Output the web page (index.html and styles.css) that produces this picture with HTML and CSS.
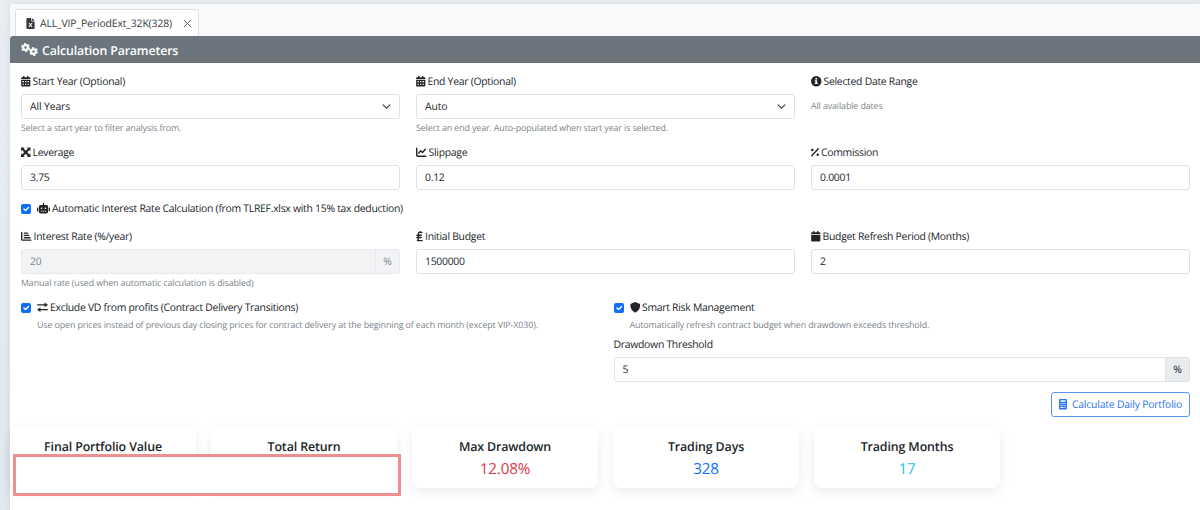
FILE: index.html
```html
<!DOCTYPE html>
<html lang="en">
<head>
    <meta charset="UTF-8">
    <meta name="viewport" content="width=device-width, initial-scale=1.0">
    <title>Portfolio Calculation</title>
    <link rel="stylesheet" href="styles.css">
</head>
<body>
    <div class="panel">
        <div class="tabs">
            <div class="tab">
                <svg class="icon-file" viewBox="0 0 384 512"><path fill="currentColor" fill-rule="evenodd" d="M64 0C29 0 0 29 0 64v384c0 35 29 64 64 64h256c35 0 64-29 64-64V160H256c-18 0-32-14-32-32V0H64zm192 0v128h128L256 0zM96 228h56l40 60 40-60h56l-66 96 66 96h-56l-40-60-40 60H96l66-96-66-96z"/></svg>
                <span class="tab-name">ALL_VIP_PeriodExt_32K(328)</span>
                <svg class="tab-close" viewBox="0 0 10 10"><path d="M1 1l8 8M9 1L1 9" fill="none" stroke="currentColor" stroke-width="1"/></svg>
            </div>
        </div>
        <div class="panel-header">
            <svg class="icon-cogs" viewBox="0 0 34 26">
                <g fill="none" stroke="currentColor">
                    <circle cx="9" cy="9" r="4.8" stroke-width="4.4"/>
                    <circle cx="9" cy="9" r="7.4" stroke-width="3.2" stroke-dasharray="4.2 3.55"/>
                    <circle cx="25" cy="17" r="4.6" stroke-width="4.2"/>
                    <circle cx="25" cy="17" r="7.2" stroke-width="3.2" stroke-dasharray="4 3.54"/>
                </g>
            </svg>
            <span class="panel-title">Calculation Parameters</span>
        </div>

        <form class="params">
            <div class="row row-dates">
                <div class="field">
                    <label for="start-year">
                        <svg class="icon w9" viewBox="0 0 448 512"><path fill="currentColor" fill-rule="evenodd" d="M96 0h64v64h128V0h64v64h48c26 0 48 22 48 48v48H0v-48c0-26 22-48 48-48h48V0zM0 192h448v272c0 26-22 48-48 48H48c-26 0-48-22-48-48V192zm64 56v56h72v-56H64zm124 0v56h72v-56h-72zm124 0v56h72v-56h-72zM64 376v56h72v-56H64zm124 0v56h72v-56h-72zm124 0v56h72v-56h-72z"/></svg>
                        <span>Start Year (Optional)</span>
                    </label>
                    <select id="start-year" class="control select"><option>All Years</option></select>
                    <small class="help">Select a start year to filter analysis from.</small>
                </div>
                <div class="field">
                    <label for="end-year">
                        <svg class="icon w9" viewBox="0 0 448 512"><path fill="currentColor" fill-rule="evenodd" d="M96 0h64v64h128V0h64v64h48c26 0 48 22 48 48v48H0v-48c0-26 22-48 48-48h48V0zM0 192h448v272c0 26-22 48-48 48H48c-26 0-48-22-48-48V192zm64 56v56h72v-56H64zm124 0v56h72v-56h-72zm124 0v56h72v-56h-72zM64 376v56h72v-56H64zm124 0v56h72v-56h-72zm124 0v56h72v-56h-72z"/></svg>
                        <span>End Year (Optional)</span>
                    </label>
                    <select id="end-year" class="control select"><option>Auto</option></select>
                    <small class="help">Select an end year. Auto-populated when start year is selected.</small>
                </div>
                <div class="field">
                    <label>
                        <svg class="icon w10" viewBox="0 0 512 512"><path fill="currentColor" fill-rule="evenodd" d="M256 0a256 256 0 1 0 0 512 256 256 0 1 0 0-512zm-44 100h88v76h-88v-76zm-28 112h116v128h32v56H180v-56h36v-72h-32v-56z"/></svg>
                        <span>Selected Date Range</span>
                    </label>
                    <small class="date-range">All available dates</small>
                </div>
            </div>

            <div class="row row-costs">
                <div class="field">
                    <label for="leverage">
                        <svg class="icon w9" viewBox="0 0 448 448"><path fill="currentColor" d="M0 0h172l-50 50 102 102L326 50 276 0h172v172l-50-50-102 102 102 102 50-50v172H276l50-50-102-102-102 102 50 50H0V276l50 50 102-102L50 122 0 172z"/></svg>
                        <span>Leverage</span>
                    </label>
                    <input id="leverage" class="control" type="text" value="3.75">
                </div>
                <div class="field">
                    <label for="slippage">
                        <svg class="icon w10" viewBox="0 0 512 512"><path fill="none" stroke="currentColor" stroke-width="68" stroke-linecap="round" stroke-linejoin="round" d="M34 64v336c0 26 22 48 48 48h396M128 300l100-116 88 82 142-154"/></svg>
                        <span>Slippage</span>
                    </label>
                    <input id="slippage" class="control" type="text" value="0.12">
                </div>
                <div class="field">
                    <label for="commission">
                        <svg class="icon w8" viewBox="0 0 384 448"><path fill="none" stroke="currentColor" stroke-width="66" stroke-linecap="round" d="M348 60L36 388"/><circle cx="62" cy="110" r="60" fill="currentColor"/><circle cx="322" cy="340" r="60" fill="currentColor"/></svg>
                        <span>Commission</span>
                    </label>
                    <input id="commission" class="control" type="text" value="0.0001">
                </div>
            </div>

            <label class="check check-auto">
                <input type="checkbox" checked>
                <svg class="icon w13" viewBox="0 0 640 512"><path fill="currentColor" fill-rule="evenodd" d="M288 0h64v96h112c44 0 80 36 80 80v256c0 44-36 80-80 80H176c-44 0-80-36-80-80V176c0-44 36-80 80-80h112V0zM224 216a40 40 0 1 0 0 80 40 40 0 1 0 0-80zm192 0a40 40 0 1 0 0 80 40 40 0 1 0 0-80zM192 376v40h64v-40h-64zm96 0v40h64v-40h-64zm96 0v40h64v-40h-64zM64 224v192H48c-26 0-48-22-48-48v-96c0-26 22-48 48-48h16zm512 0h16c26 0 48 22 48 48v96c0 26-22 48-48 48h-16V224z"/></svg>
                <span>Automatic Interest Rate Calculation (from TLREF.xlsx with 15% tax deduction)</span>
            </label>

            <div class="row row-budget">
                <div class="field">
                    <label for="interest">
                        <svg class="icon w10" viewBox="0 0 512 512"><path fill="none" stroke="currentColor" stroke-width="64" stroke-linecap="round" stroke-linejoin="round" d="M34 64v336c0 26 22 48 48 48h396M160 104h160M160 216h220M160 328h280"/></svg>
                        <span>Interest Rate (%/year)</span>
                    </label>
                    <div class="group disabled">
                        <input id="interest" class="control" type="text" value="20" disabled>
                        <span class="addon">%</span>
                    </div>
                    <small class="help">Manual rate (used when automatic calculation is disabled)</small>
                </div>
                <div class="field">
                    <label for="budget">
                        <svg class="icon w6" viewBox="0 0 320 512"><path fill="none" stroke="currentColor" stroke-width="70" stroke-linecap="round" d="M274 76C190 20 106 60 106 152v200c0 60-30 108-70 118h250M34 210h210M34 320h210"/></svg>
                        <span>Initial Budget</span>
                    </label>
                    <input id="budget" class="control" type="text" value="1500000">
                </div>
                <div class="field">
                    <label for="refresh">
                        <svg class="icon w9" viewBox="0 0 448 512"><path fill="currentColor" d="M96 0h64v64h128V0h64v64h48c26 0 48 22 48 48v48H0v-48c0-26 22-48 48-48h48V0zM0 192h448v272c0 26-22 48-48 48H48c-26 0-48-22-48-48V192z"/></svg>
                        <span>Budget Refresh Period (Months)</span>
                    </label>
                    <input id="refresh" class="control" type="text" value="2">
                </div>
            </div>

            <div class="row row-risk">
                <div class="field">
                    <label class="check">
                        <input type="checkbox" checked>
                        <svg class="icon w11" viewBox="0 0 512 448"><path fill="none" stroke="currentColor" stroke-width="60" stroke-linecap="round" stroke-linejoin="round" d="M32 112h330M150 336h330"/><path fill="currentColor" d="M350 0l162 112-162 112zM162 224v224L0 336z"/></svg>
                        <span>Exclude VD from profits (Contract Delivery Transitions)</span>
                    </label>
                    <small class="help help-indent">Use open prices instead of previous day closing prices for contract delivery at the beginning of each month (except VIP-X030).</small>
                </div>
                <div class="field">
                    <label class="check">
                        <input type="checkbox" checked>
                        <svg class="icon w10" viewBox="0 0 512 512"><path fill="currentColor" d="M256 0l208 84c20 8 34 28 34 50-2 150-62 300-222 374a48 48 0 0 1-40 0C76 434 16 284 14 134c0-22 14-42 34-50z"/></svg>
                        <span>Smart Risk Management</span>
                    </label>
                    <small class="help help-indent">Automatically refresh contract budget when drawdown exceeds threshold.</small>
                    <label for="threshold" class="threshold-label"><span>Drawdown Threshold</span></label>
                    <div class="group">
                        <input id="threshold" class="control" type="text" value="5">
                        <span class="addon">%</span>
                    </div>
                </div>
            </div>

            <div class="actions">
                <button type="button" class="btn">
                    <svg class="icon-calc" viewBox="0 0 384 512"><path fill="currentColor" fill-rule="evenodd" d="M48 0h288c26 0 48 22 48 48v416c0 26-22 48-48 48H48c-26 0-48-22-48-48V48C0 22 22 0 48 0zm24 64v76h240V64H72zm0 134v50h50v-50H72zm95 0v50h50v-50h-50zm95 0v50h50v-50h-50zM72 294v50h50v-50H72zm95 0v50h50v-50h-50zm95 0v50h50v-50h-50zM72 390v50h145v-50H72zm190 0v50h50v-50h-50z"/></svg>
                    <span>Calculate Daily Portfolio</span>
                </button>
            </div>
        </form>

        <div class="stats">
            <div class="stat">
                <h6>Final Portfolio Value</h6>
            </div>
            <div class="stat">
                <h6>Total Return</h6>
            </div>
            <div class="stat">
                <h6>Max Drawdown</h6>
                <span class="value red">12.08%</span>
            </div>
            <div class="stat">
                <h6>Trading Days</h6>
                <span class="value blue">328</span>
            </div>
            <div class="stat">
                <h6>Trading Months</h6>
                <span class="value cyan">17</span>
            </div>
            <div class="highlight"></div>
        </div>
    </div>
</body>
</html>
```

FILE: styles.css
```css
* {
    box-sizing: border-box;
}
body {
    margin: 0;
    padding: 4px 0 0 10px;
    height: 510px;
    overflow: hidden;
    font-family: "Open Sans", "Noto Sans", sans-serif;
    font-size: 10.4px;
    letter-spacing: -0.12px;
    text-rendering: geometricPrecision;
    color: #212529;
    background: linear-gradient(#eaeef3, #e2e7f0);
}
.panel {
    height: 520px;
    background: #fff;
    box-shadow: 0 0 8px rgba(0, 0, 0, 0.08);
}
.tabs {
    display: flex;
    height: 32px;
    padding: 5px 0 0 5px;
    background: #f8f9fb;
}
.tab {
    display: flex;
    align-items: center;
    width: 184px;
    padding: 0 6px 0 10px;
    border: 1px solid #dee2e6;
    border-bottom: none;
    border-radius: 3px 3px 0 0;
    background: #fff;
    color: #343a40;
}
.icon-file {
    width: 9px;
    height: 11px;
    margin-right: 5px;
}
.tab-name {
    padding-top: 1px;
    white-space: nowrap;
}
.tab-close {
    width: 9px;
    height: 9px;
    margin-left: auto;
    color: #555;
}
.panel-header {
    display: flex;
    align-items: center;
    height: 27px;
    padding: 0 10px 0 11px;
    border-radius: 3px 0 0 0;
    background: #6c757d;
    color: #fff;
}
.icon-cogs {
    width: 17px;
    height: 13px;
    margin-right: 4px;
}
.panel-title {
    padding-top: 1px;
    font-size: 12.3px;
    font-weight: 600;
}
.params {
    padding: 10px 10px 0 11px;
}
.row {
    display: grid;
    grid-template-columns: repeat(3, 1fr);
    column-gap: 16px;
}
.row-costs {
    margin-top: 9px;
}
.row-budget {
    margin-top: 11px;
}
.row-risk {
    grid-template-columns: repeat(2, 1fr);
    margin-top: 9px;
}
.field {
    min-width: 0;
}
label {
    display: flex;
    align-items: center;
    height: 17px;
    margin-bottom: 4px;
    letter-spacing: -0.27px;
    white-space: nowrap;
}
label span {
    padding-top: 1px;
}
.icon {
    height: 10.5px;
    margin-right: 2px;
    flex: none;
}
.w6 { width: 7px; }
.w8 { width: 8px; }
.w9 { width: 9.5px; }
.w10 { width: 10.5px; }
.w11 { width: 11px; }
.w13 { width: 13px; }
.control {
    display: block;
    width: 100%;
    height: 25px;
    margin: 0;
    padding: 1px 8px 0;
    border: 1px solid #dee2e6;
    border-radius: 3px;
    background: #fff;
    color: #212529;
    font: inherit;
    letter-spacing: -0.27px;
    text-rendering: inherit;
}
.select {
    appearance: none;
    letter-spacing: -0.12px;
    background: #fff url("data:image/svg+xml,%3Csvg xmlns='http://www.w3.org/2000/svg' viewBox='0 0 16 16'%3E%3Cpath fill='none' stroke='%23343a40' stroke-linecap='round' stroke-linejoin='round' stroke-width='2' d='m2 5 6 6 6-6'/%3E%3C/svg%3E") no-repeat right 8px center / 9px 9px;
}
.help {
    display: block;
    height: 14px;
    margin-top: 2px;
    font-size: 8.9px;
    line-height: 14px;
    color: #7b838a;
    white-space: nowrap;
}
.date-range {
    display: block;
    margin-top: 5px;
    font-size: 8.9px;
    line-height: 14px;
    color: #7b838a;
}
.field .date-range {
    padding-top: 4px;
}
.group {
    display: flex;
}
.group .control {
    flex: 1;
    border-radius: 3px 0 0 3px;
}
.addon {
    display: flex;
    align-items: center;
    justify-content: center;
    width: 25px;
    margin-left: -1px;
    border: 1px solid #dee2e6;
    border-radius: 0 3px 3px 0;
    background: #e9ecef;
}
.disabled .control,
.disabled .addon {
    border-color: #e6e9ec;
    background: #f2f3f5;
    color: #85898d;
}
.check {
    margin: 0;
}
.check-auto {
    margin-top: 10px;
}
.check input {
    appearance: none;
    width: 10px;
    height: 10px;
    margin: 0 6px 0 0;
    border-radius: 2px;
    background: #0d6efd url("data:image/svg+xml,%3Csvg xmlns='http://www.w3.org/2000/svg' viewBox='0 0 20 20'%3E%3Cpath fill='none' stroke='%23fff' stroke-linecap='round' stroke-linejoin='round' stroke-width='3' d='m6 10 3 3 6-6'/%3E%3C/svg%3E") center / 10px;
}
.help-indent {
    padding-left: 16px;
}
.threshold-label {
    margin-top: 4px;
}
.actions {
    display: flex;
    justify-content: flex-end;
    margin-top: 10px;
}
.btn {
    display: flex;
    align-items: center;
    justify-content: center;
    width: 139px;
    height: 25px;
    padding: 0;
    border: 1px solid #5b95f0;
    border-radius: 3px;
    background: #fff;
    color: #2d74ea;
    font: inherit;
    letter-spacing: -0.2px;
    text-rendering: inherit;
    white-space: nowrap;
}
.btn span {
    padding-top: 1px;
}
.icon-calc {
    width: 8px;
    height: 10.5px;
    margin-right: 5px;
}
.stats {
    position: relative;
    display: grid;
    grid-template-columns: repeat(5, 186px);
    column-gap: 15px;
    margin-top: 10px;
}
.stat {
    height: 61px;
    padding-top: 11px;
    border-radius: 8px;
    background: #fff;
    box-shadow: 0 4px 12px rgba(0, 0, 0, 0.08);
    text-align: center;
}
.stat h6 {
    margin: 0;
    font-size: 12.4px;
    font-weight: 600;
    line-height: 18px;
}
.value {
    display: block;
    font-size: 15.2px;
    line-height: 26px;
}
.red { color: #dc3545; }
.blue { color: #0d6efd; }
.cyan { color: #17c3e6; }
.highlight {
    position: absolute;
    left: 3px;
    top: 27px;
    width: 388px;
    height: 42px;
    border: 3px solid #ec9090;
    background: #fff;
}
```
